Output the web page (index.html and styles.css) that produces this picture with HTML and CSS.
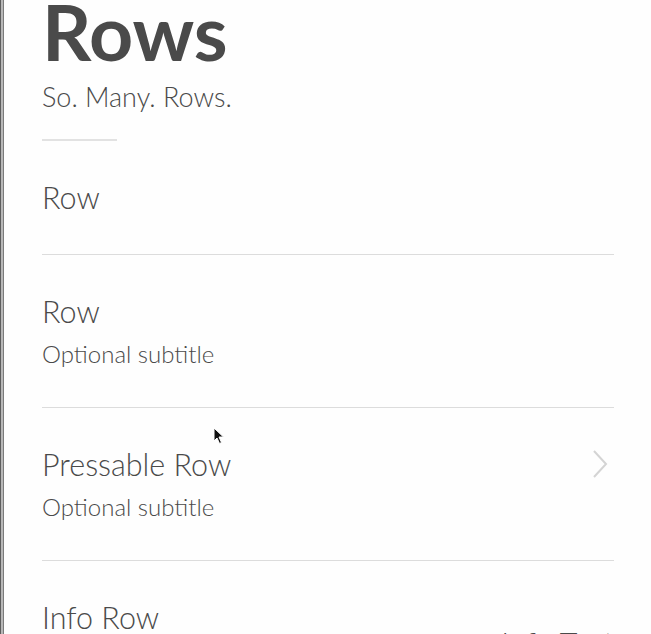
FILE: index.html
```html
<!DOCTYPE html>
<html lang="en">
<head>
    <meta charset="UTF-8">
    <meta name="viewport" content="width=device-width, initial-scale=1.0">
    <title>Rows</title>
    <link rel="stylesheet" href="styles.css">
</head>
<body>
    <div class="screen">
        <!-- Page header -->
        <header class="page-header">
            <h1>Rows</h1>
            <p class="page-subtitle">So. Many. Rows.</p>
            <div class="accent-rule"></div>
        </header>

        <!-- Row list -->
        <ul class="row-list">
            <li class="row">
                <div class="row-text">
                    <div class="row-title">Row</div>
                </div>
            </li>
            <li class="row">
                <div class="row-text">
                    <div class="row-title">Row</div>
                    <div class="row-subtitle">Optional subtitle</div>
                </div>
            </li>
            <li class="row pressable">
                <div class="row-text">
                    <div class="row-title">Pressable Row</div>
                    <div class="row-subtitle">Optional subtitle</div>
                </div>
                <svg class="chevron" width="16" height="28" viewBox="0 0 16 28">
                    <polyline points="2,1 14,14 2,27" fill="none" stroke="#d4d4d4" stroke-width="2"/>
                </svg>
            </li>
            <li class="row">
                <div class="row-text">
                    <div class="row-title">Info Row</div>
                    <div class="row-subtitle">Optional subtitle</div>
                </div>
                <div class="row-info">Info Text</div>
            </li>
        </ul>

        <!-- Mouse pointer from the capture -->
        <svg class="cursor" width="12" height="18" viewBox="0 0 12 18">
            <path d="M1 1 L1 14 L4 11 L6.5 16.5 L8.5 15.5 L6 10 L10.5 10 Z" fill="#111" stroke="#fff" stroke-width="1"/>
        </svg>
    </div>
</body>
</html>
```

FILE: styles.css
```css
html, body {
    margin: 0;
    padding: 0;
    height: 100%;
}

body {
    font-family: Lato, "Noto Sans", sans-serif;
    background-color: #fefefe;
    color: #4a4a4a;
    overflow: hidden;
}

.screen {
    position: relative;
    height: 634px;
    box-sizing: border-box;
    border-left: 1px solid #5e5e5e;
    box-shadow: inset 2px 0 0 #b8b8b8, inset 3px 0 0 #7a7a7a;
    padding: 0 37px 0 41px;
    overflow: hidden;
}

/* Header */
.page-header h1 {
    margin: 0;
    font-size: 77px;
    font-weight: 700;
    line-height: 62px;
}

.page-subtitle {
    margin: 20px 0 0 0;
    font-size: 27px;
    line-height: 30px;
    font-weight: 300;
}

.accent-rule {
    width: 75px;
    height: 2px;
    background-color: #e2e2e2;
    margin-top: 27px;
}

/* Rows */
.row-list {
    list-style: none;
    margin: 0;
    padding: 0;
}

.row {
    display: flex;
    align-items: center;
    justify-content: space-between;
    padding: 36px 0 37px 0;
    border-bottom: 1px solid #dcdcdc;
}

.row-title {
    font-size: 30.5px;
    font-weight: 300;
    line-height: 40px;
}

.row-subtitle {
    margin-top: 7px;
    font-size: 24px;
    font-weight: 300;
    line-height: 32px;
    color: #4a4a4a;
}

.chevron {
    align-self: flex-start;
    margin: 6px 6px 0 0;
}

.row-info {
    padding-top: 12px;
    font-size: 30.5px;
    font-weight: 300;
    color: #4a4a4a;
}

.cursor {
    position: absolute;
    left: 212px;
    top: 427px;
}
```
